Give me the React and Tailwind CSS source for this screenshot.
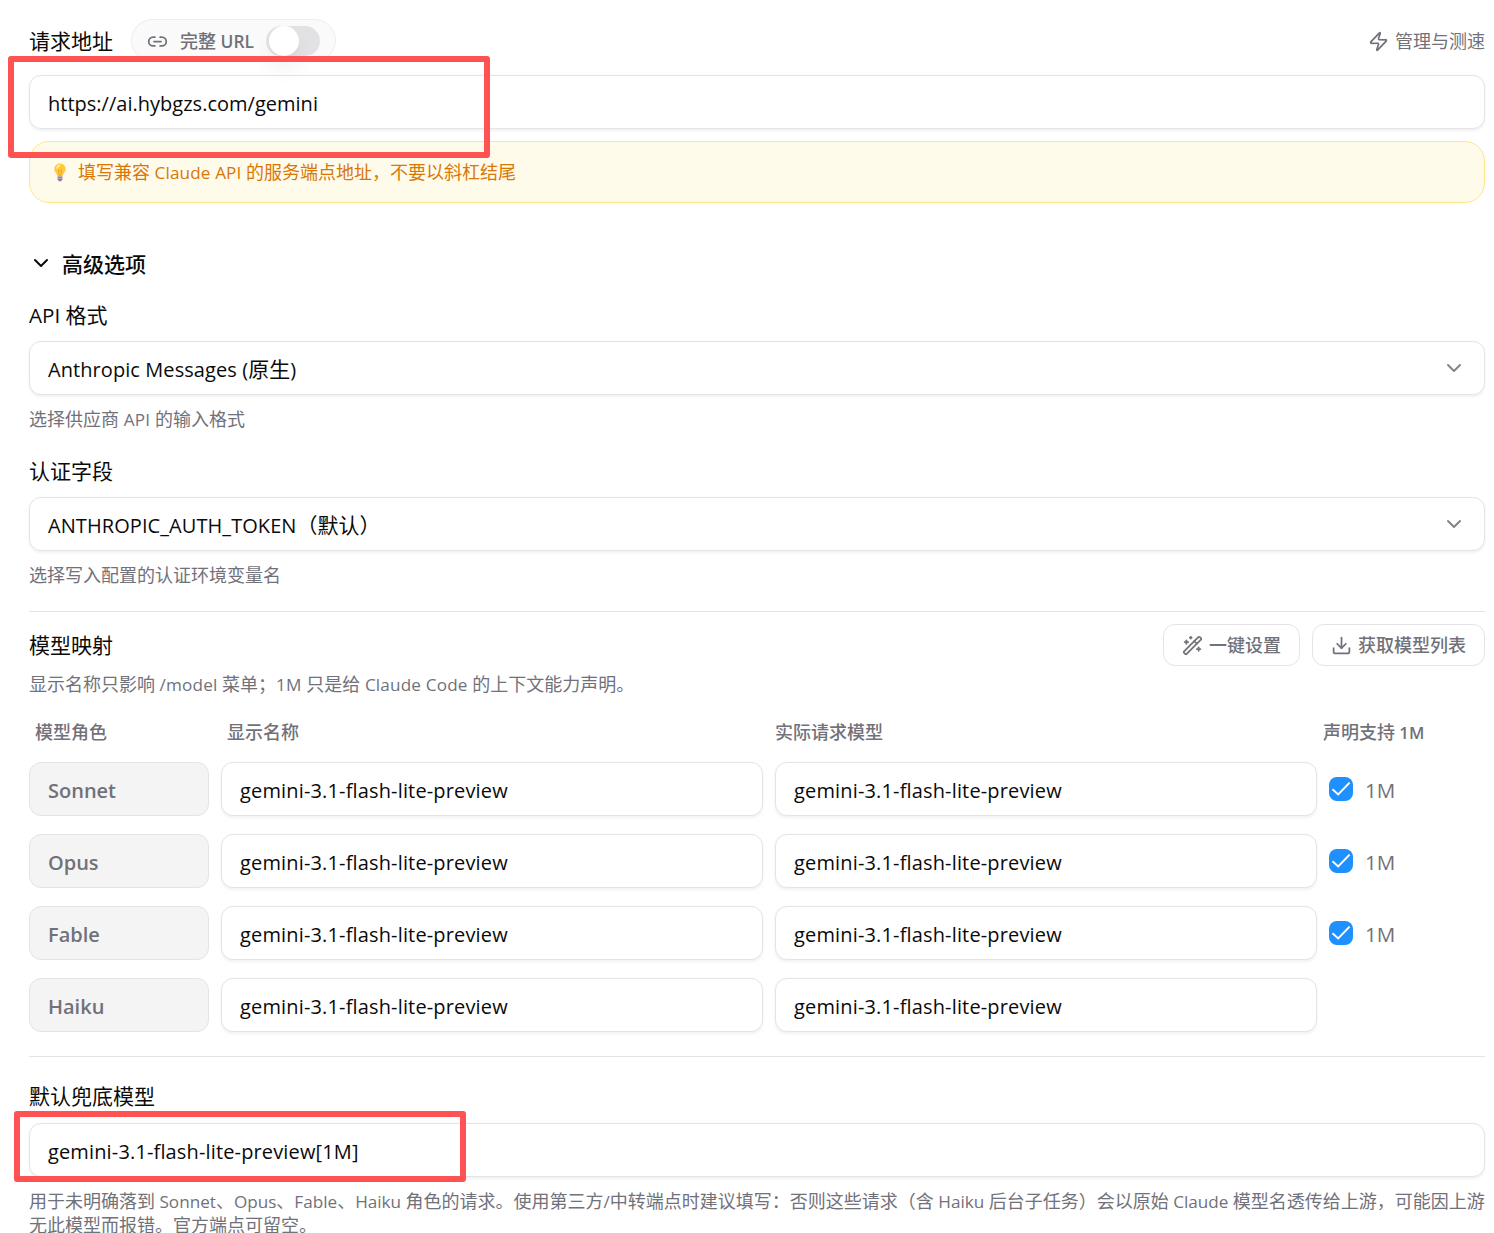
import { ChevronDown, Download, Link2, WandSparkles, Zap } from "lucide-react";

const MODEL = "gemini-3.1-flash-lite-preview";

const roles = [
  { name: "Sonnet", supports1M: true },
  { name: "Opus", supports1M: true },
  { name: "Fable", supports1M: true },
  { name: "Haiku", supports1M: false },
];

// Latin runs are set a bit smaller than the CJK text around them
const Text = ({ children, className = "", latin = "text-[0.952em]" }) => (
  <span className={`whitespace-pre ${className}`}>
    {children.split(/([\x20-\x7e]+)/).map((part, i) =>
      i % 2 ? (
        <span key={i} className={latin}>
          {part}
        </span>
      ) : (
        part
      )
    )}
  </span>
);

const Field = ({ children, className = "" }) => (
  <div
    className={`flex h-[54px] items-center rounded-xl border border-[#e4e4e7] bg-white px-[18px] pt-1 text-[21px] shadow-[0_1.5px_3px_rgba(0,0,0,0.06)] ${className}`}
  >
    {children}
  </div>
);

const Select = ({ children }) => (
  <Field className="justify-between">
    <Text latin="text-[0.952em] tracking-[0.08px]">{children}</Text>
    <ChevronDown className="-mt-1 size-6 text-[#858585]" strokeWidth={2} />
  </Field>
);

const Label = ({ children, className = "" }) => (
  <div className={`h-[30px] text-[21px] leading-[30px] ${className}`}>
    <Text latin="text-[0.98em]">{children}</Text>
  </div>
);

const Hint = ({ children, className = "" }) => (
  <div className={`text-lg leading-6 text-[#71717a] ${className}`}>
    {children}
  </div>
);

const OutlineButton = ({ icon: Icon, children }) => (
  <button
    type="button"
    className="flex h-[42px] items-center gap-1.5 rounded-xl border border-[#e4e4e7] px-[18px] text-lg font-medium text-[#71717a]"
  >
    <Icon className="size-[21px]" strokeWidth={2} />
    <Text>{children}</Text>
  </button>
);

const Checkbox = () => (
  <span className="flex size-6 items-center justify-center rounded-lg bg-[#1e90ff] text-white">
    <svg viewBox="0 0 24 24" className="size-6" fill="none">
      <path
        d="M3.500 12.200 9.200 17.400 20.600 5.600"
        stroke="currentColor"
        strokeWidth="2"
      />
    </svg>
  </span>
);

const Bulb = () => (
  <svg viewBox="0 0 12 19" className="h-[19px] w-3" fill="none">
    <path
      d="M6 .5C2.8.5.4 2.9.4 6c0 2.300 1.300 3.500 2.200 5 .5.900.5 1.800.9 2.500h5c.4-.7.4-1.600.9-2.500.9-1.500 2.200-2.700 2.200-5C11.600 2.900 9.200.5 6 .5Z"
      fill="#ffc93c"
    />
    <path d="M3 5.500c.2-1.700 1.300-2.900 3-3.100" stroke="#fff0b0" strokeWidth="1.600" />
    <path d="m4.300 7 1 6M7.700 7l-1 6M4.300 7l1.700 1 1.700-1" stroke="#e89b1c" strokeWidth=".7" />
    <path d="M3.600 13.500h4.800v2.800L7 18.300H5l-1.400-2Z" fill="#8c79a8" />
    <path d="M3.600 15.300h4.800" stroke="#c9bddb" strokeWidth=".8" />
  </svg>
);

const HighlightBox = ({ className }) => (
  <div
    className={`pointer-events-none absolute rounded-[3px] border-6 border-[#ff5252] ${className}`}
  />
);

const App = () => {
  return (
    <div className="relative h-[1233px] w-[1494px] overflow-hidden bg-white pr-[9px] pl-[29px] pt-[19px] font-['Open_Sans','Noto_Sans_CJK_SC',sans-serif] text-[#0a0a0a]">
      <div className="flex h-[43px] items-center justify-between">
        <div className="flex items-center gap-[18px]">
          <Label>请求地址</Label>
          <div className="flex h-[43px] w-[205px] items-center rounded-full border border-[#ededef] bg-[#fafafa] pl-[15px] text-lg font-medium text-[#71717a]">
            <Link2 className="mt-px size-[21px]" strokeWidth={2} />
            <Text
              className="ml-3 w-[75px] pt-0.5"
              latin="text-[0.965em] font-semibold"
            >
              完整 URL
            </Text>
            <span className="ml-[11px] flex h-[30px] w-[54px] rounded-full bg-[#e2e2e5] pl-[3px]">
              <span className="size-[30px] rounded-full bg-white shadow-[0_15px_22px_-4px_rgba(0,0,0,0.1),0_6px_9px_-6px_rgba(0,0,0,0.1)]" />
            </span>
          </div>
        </div>
        <div className="flex items-center gap-1.5 pt-px text-lg text-[#71717a]">
          <Zap className="size-[21px]" strokeWidth={2} />
          <Text>管理与测速</Text>
        </div>
      </div>

      <Field className="mt-[13px]">
        <Text latin="text-[0.952em] tracking-[0.02px]">
          https://ai.hybgzs.com/gemini
        </Text>
      </Field>
      <div className="mt-3 flex h-[62px] items-center gap-3 rounded-[20px] border border-[#fde68a] bg-[#fffbeb] pl-6 text-lg text-[#d97706]">
        <Bulb />
        <Text latin="text-[0.952em] tracking-[0.13px]">
          填写兼容 Claude API 的服务端点地址，不要以斜杠结尾
        </Text>
      </div>

      <div className="mt-[47px] flex h-[30px] items-center gap-[9px] text-[21px] font-medium">
        <ChevronDown className="-mt-1 size-6" strokeWidth={2} />
        <Text>高级选项</Text>
      </div>

      <Label className="mt-5 mb-[11px]">API 格式</Label>
      <Select>Anthropic Messages (原生)</Select>
      <Hint className="mt-3">
        <Text latin="text-[0.952em] tracking-[0.25px]">
          选择供应商 API 的输入格式
        </Text>
      </Hint>

      <Label className="mt-6 mb-[11px]">认证字段</Label>
      <Select>ANTHROPIC_AUTH_TOKEN（默认）</Select>
      <Hint className="mt-3">
        <Text>选择写入配置的认证环境变量名</Text>
      </Hint>

      <div className="mt-6 border-t border-[#e4e4e7] pt-3">
        <div className="flex h-[42px] items-center justify-between">
          <Label>模型映射</Label>
          <div className="flex gap-3">
            <OutlineButton icon={WandSparkles}>一键设置</OutlineButton>
            <OutlineButton icon={Download}>获取模型列表</OutlineButton>
          </div>
        </div>
        <Hint className="mt-1.5">
          <Text latin="text-[0.952em] tracking-[0.17px]">
            显示名称只影响 /model 菜单；1M 只是给 Claude Code 的上下文能力声明。
          </Text>
        </Hint>
      </div>

      <div className="mt-[23px] grid grid-cols-[180px_1fr_1fr_156px] gap-3 px-1.5 text-lg leading-6 font-medium text-[#71717a]">
        <Text>模型角色</Text>
        <Text>显示名称</Text>
        <Text>实际请求模型</Text>
        <Text latin="text-[0.93em] font-semibold">声明支持 1M</Text>
      </div>
      <div className="mt-[17px] flex flex-col gap-[18px]">
        {roles.map((role) => (
          <div
            key={role.name}
            className="grid grid-cols-[180px_1fr_1fr_156px] gap-3"
          >
            <div className="flex h-[54px] items-center rounded-xl border border-[#e4e4e7] bg-[#f4f4f4] px-[18px] pt-1 text-[21px] font-semibold text-[#71717a]">
              <Text>{role.name}</Text>
            </div>
            <Field>
              <Text latin="text-[0.952em] tracking-[0.16px]">{MODEL}</Text>
            </Field>
            <Field>
              <Text latin="text-[0.952em] tracking-[0.16px]">{MODEL}</Text>
            </Field>
            {role.supports1M && (
              <label className="flex items-center gap-3 text-[21px] text-[#71717a]">
                <Checkbox />
                <Text className="pt-1" latin="text-[0.98em]">
                  1M
                </Text>
              </label>
            )}
          </div>
        ))}
      </div>

      <div className="mt-6 border-t border-[#e4e4e7] pt-6">
        <Label className="mb-3">默认兜底模型</Label>
        <Field>
          <Text latin="text-[0.952em] tracking-[0.15px]">{`${MODEL}[1M]`}</Text>
        </Field>
        <Hint className="mt-3 flex flex-col">
          <Text>用于未明确落到 Sonnet、Opus、Fable、Haiku 角色的请求。使用第三方/中转端点时建议填写：否则这些请求（含 Haiku 后台子任务）会以原始 Claude 模型名透传给上游，可能因上游</Text>
          <Text className="-mt-px">无此模型而报错。官方端点可留空。</Text>
        </Hint>
      </div>

      <HighlightBox className="top-14 left-2 h-[102px] w-[482px]" />
      <HighlightBox className="top-[1111px] left-[14px] h-[71px] w-[452px]" />
    </div>
  );
};

export default App;
